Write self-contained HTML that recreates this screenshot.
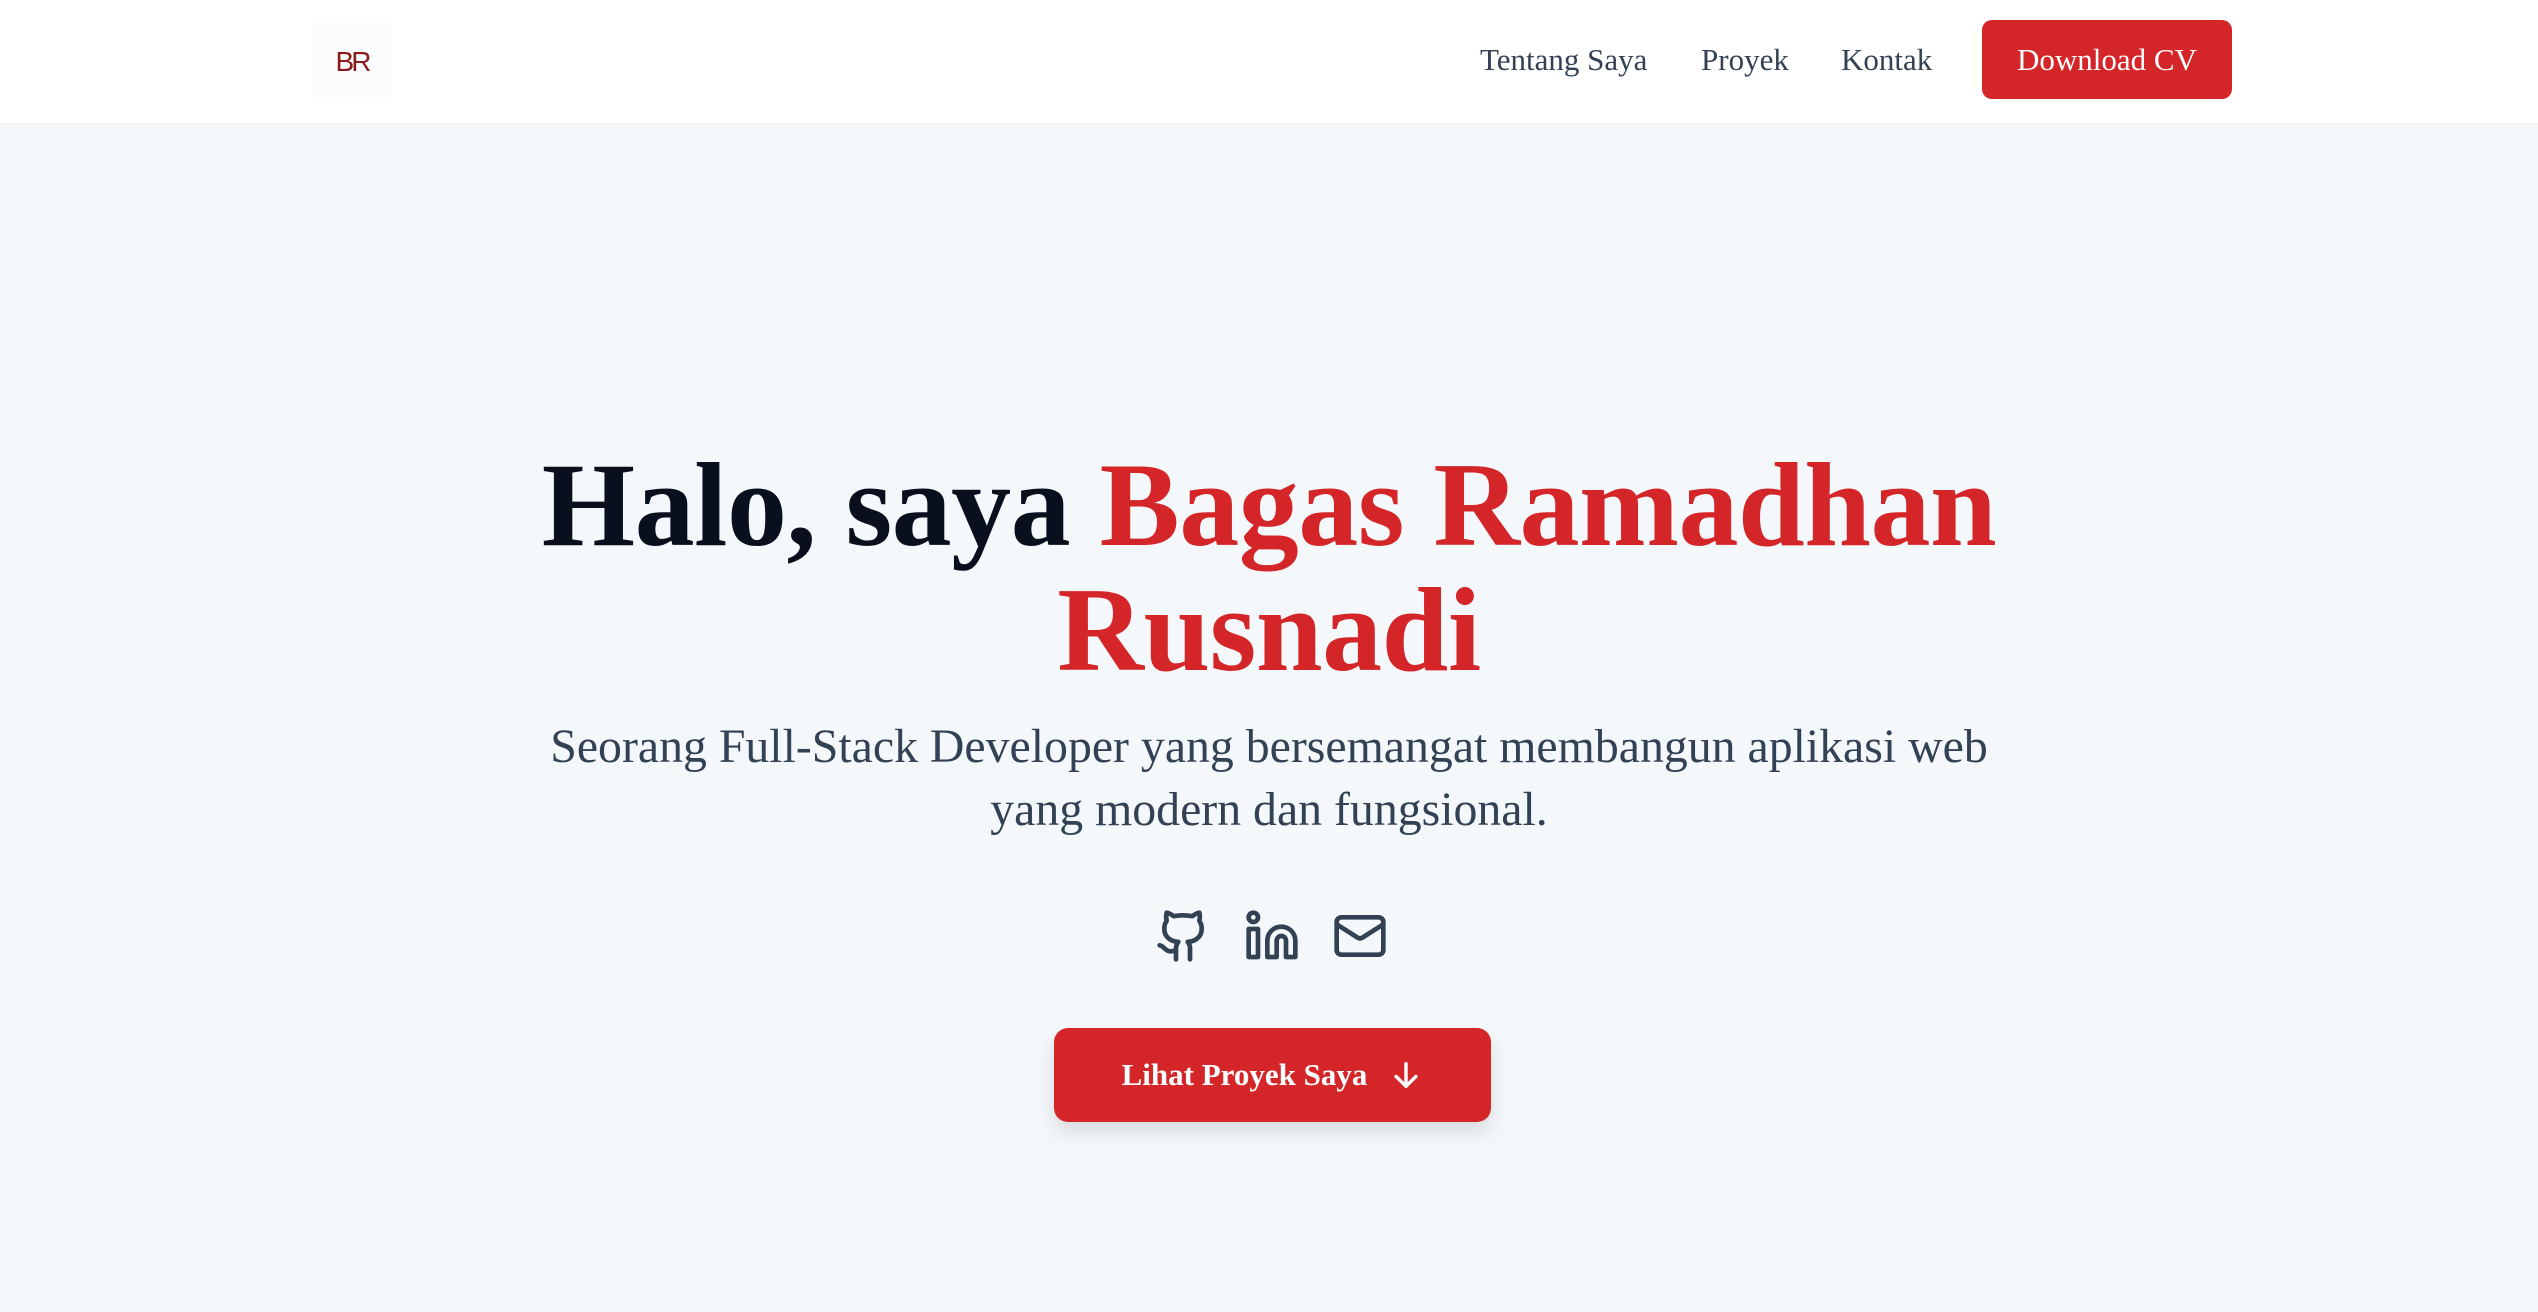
<!DOCTYPE html>
<html><head><meta charset="utf-8"><style>
*{margin:0;padding:0;box-sizing:border-box}
body{width:2538px;height:1312px;background:#f5f8fb;font-family:"Liberation Serif",serif;position:relative;overflow:hidden}
.nav{position:absolute;left:0;top:0;width:2538px;height:123px;background:#fff;box-shadow:0 1px 3px rgba(0,0,0,.04)}
.logo{position:absolute;left:312px;top:22px;width:80px;height:80px;background:#fbfcfd;display:flex;align-items:center;justify-content:center;font-family:"Liberation Sans",sans-serif;color:#8b1a1a;font-size:28px;letter-spacing:-3px}
.nl{position:absolute;top:38px;font-size:31px;color:#334155;line-height:44px}
.cv{position:absolute;left:1982px;top:20px;width:250px;height:79px;background:#d42628;border-radius:10px;color:#fff;font-size:31px;display:flex;align-items:center;justify-content:center}
h1{position:absolute;left:0;top:442px;width:2538px;text-align:center;font-size:120px;line-height:125px;font-weight:bold;color:#0a0f1e;letter-spacing:-0.5px}
h1 span{color:#d42628}
.sub{position:absolute;left:519px;top:715px;width:1500px;text-align:center;font-size:47.8px;line-height:63px;color:#334155}
.ic{position:absolute;top:908px}
.btn{position:absolute;left:1054px;top:1028px;width:437px;height:94px;background:#d42628;border-radius:14px;color:#fff;font-weight:bold;font-size:31px;display:flex;align-items:center;justify-content:center;box-shadow:0 10px 20px rgba(0,0,0,.12)}
</style></head><body>
<div class="nav">
<div class="logo">BR</div>
<div class="nl" style="left:1480px">Tentang Saya</div>
<div class="nl" style="left:1701px">Proyek</div>
<div class="nl" style="left:1841px">Kontak</div>
<div class="cv">Download CV</div>
</div>
<h1>Halo, saya <span>Bagas Ramadhan<br>Rusnadi</span></h1>
<div class="sub">Seorang Full-Stack Developer yang bersemangat membangun aplikasi web<br>yang modern dan fungsional.</div>
<svg class="ic" style="left:1155px" width="56" height="56" viewBox="0 0 24 24" fill="none" stroke="#334155" stroke-width="2" stroke-linecap="round" stroke-linejoin="round"><path d="M15 22v-4a4.8 4.8 0 0 0-1-3.5c3 0 6-2 6-5.5.08-1.25-.27-2.480-1-3.5.28-1.15.28-2.350 0-3.5 0 0-1 0-3 1.5-2.640-.5-5.360-.5-8 0C6 2 5 2 5 2c-.3 1.15-.3 2.350 0 3.5A5.4 5.4 0 0 0 4 9c0 3.5 3 5.5 6 5.5-.39.49-.68 1.050-.85 1.650S8.93 17.380 9 18v4"/><path d="M9 18c-4.510 2-5-2-7-2"/></svg>
<svg class="ic" style="left:1244px" width="56" height="56" viewBox="0 0 24 24" fill="none" stroke="#334155" stroke-width="2" stroke-linecap="round" stroke-linejoin="round"><rect x="2" y="9" width="4" height="12"/><circle cx="4" cy="4" r="2"/><path d="M16 8a6 6 0 0 1 6 6v7h-4v-7a2 2 0 0 0-4 0v7h-4v-7a6 6 0 0 1 6-6z"/></svg>
<svg class="ic" style="left:1332px" width="56" height="56" viewBox="0 0 24 24" fill="none" stroke="#334155" stroke-width="2" stroke-linecap="round" stroke-linejoin="round"><rect x="2" y="4" width="20" height="16" rx="2"/><path d="m22 7-8.970 5.700a1.940 1.940 0 0 1-2.060 0L2 7"/></svg>
<div class="btn">Lihat Proyek Saya<svg style="margin-left:22px" width="34" height="34" viewBox="0 0 24 24" fill="none" stroke="#fff" stroke-width="2.4" stroke-linecap="round" stroke-linejoin="round"><path d="M12 4v16M5 13l7 7 7-7"/></svg></div>
</body></html>
